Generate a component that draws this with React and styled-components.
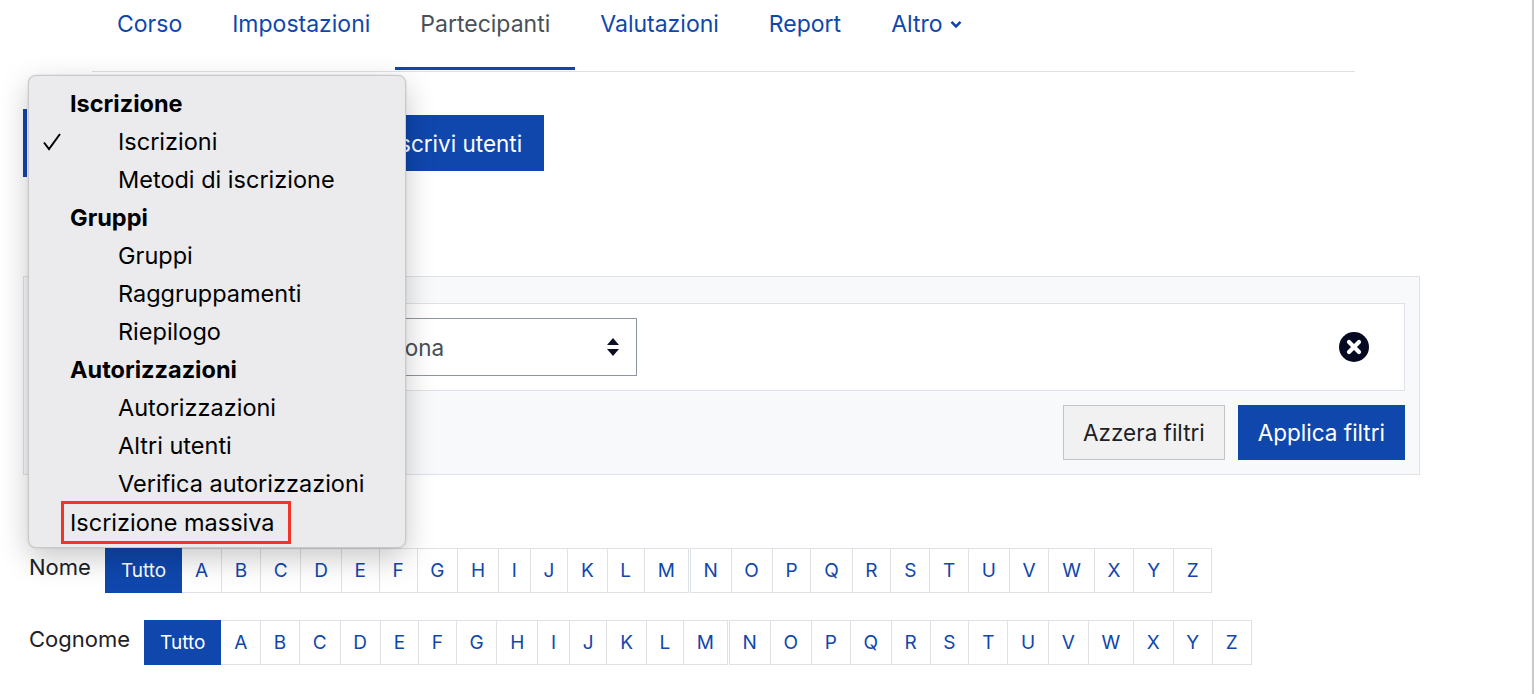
import React from "react";
import styled, { createGlobalStyle } from "styled-components";

const GlobalStyle = createGlobalStyle`
  body {
    margin: 0;
    background: #fff;
    font-family: Inter, "Noto Sans", sans-serif;
    color: #1d2125;
  }
`;

const BLUE = "#0f47ad";
const LINE = "#dee2e6";

const Page = styled.div`
  position: relative;
  width: 1534px;
  height: 694px;
  overflow: hidden;
  box-shadow: inset -2px 0 0 #c9c9c9;
`;

/* secondary navigation */
const TabBar = styled.nav`
  display: flex;
  margin-left: 92px;
  width: 1263px;
  border-bottom: 1px solid ${LINE};
  padding-bottom: 1px;
`;

const Tab = styled.a`
  display: flex;
  align-items: flex-start;
  gap: 7px;
  height: 70px;
  box-sizing: border-box;
  padding: 7px 25px 0;
  font-size: 23px;
  line-height: 34px;
  color: ${(p) => (p.$active ? "#495057" : BLUE)};
  border-bottom: 3px solid ${(p) => (p.$active ? BLUE : "transparent")};
  svg {
    margin-top: 13px;
  }
`;

const Main = styled.main`
  padding: 37px 0 0 23px;
`;

const ActionRow = styled.div`
  display: flex;
  align-items: center;
  gap: 24px;
  height: 68px;
`;

const NavSelect = styled.div`
  width: 324px;
  height: 68px;
  box-sizing: border-box;
  border-left: 4px solid ${BLUE};
  background: #fff;
`;

const Button = styled.button`
  height: ${(p) => (p.$tall ? 56 : 55)}px;
  padding: 0 ${(p) => (p.$tall ? 21 : 19)}px;
  font-family: inherit;
  font-size: 22.5px;
  border: 1px solid ${(p) => (p.$primary ? BLUE : "#c4c4c4")};
  background: ${(p) => (p.$primary ? BLUE : "#f1f1f1")};
  color: ${(p) => (p.$primary ? "#fff" : "#1d2125")};
  border-radius: 0;
`;

/* participants filter */
const FilterBox = styled.section`
  margin-top: 99px;
  width: 1397px;
  box-sizing: border-box;
  border: 1px solid ${LINE};
  background: #f8f9fa;
  padding: 26px 14px 14px;
`;

const FilterRow = styled.div`
  display: grid;
  grid-template-columns: 130px 121px 307px 1fr 30px;
  column-gap: 12px;
  align-items: center;
  height: 88px;
  box-sizing: border-box;
  padding: 0 35px 0 16px;
  background: #fff;
  border: 1px solid ${LINE};
`;

const Select = styled.div`
  display: flex;
  align-items: center;
  justify-content: space-between;
  height: 58px;
  box-sizing: border-box;
  padding: 0 16px 0 10px;
  border: 1px solid #8f959e;
  font-size: 22.5px;
  color: #495057;
`;

const ButtonRow = styled.div`
  display: flex;
  justify-content: flex-end;
  gap: 13px;
  margin-top: 14px;
`;

/* initials bars */
const Initials = styled.div`
  margin-top: 73px;
  padding-left: 6px;
  display: flex;
  flex-direction: column;
  gap: 27px;
`;

const InitialsRow = styled.div`
  display: flex;
  align-items: flex-start;
`;

const RowLabel = styled.span`
  font-size: 22px;
  line-height: 38px;
  margin-right: 14px;
  color: #1d2125;
`;

const Group = styled.div`
  display: flex;
  & + & {
    margin-left: 1px;
  }
`;

const Cell = styled.span`
  display: flex;
  align-items: center;
  height: 45px;
  box-sizing: border-box;
  padding: 0 ${(p) => (p.$active ? 15 : 12.8)}px;
  font-size: 19px;
  border: 1px solid ${(p) => (p.$active ? BLUE : LINE)};
  border-left-width: ${(p) => (p.$first ? 1 : 0)}px;
  background: ${(p) => (p.$active ? BLUE : "#fff")};
  color: ${(p) => (p.$active ? "#fff" : BLUE)};
`;

/* native select popup */
const Popup = styled.ul`
  position: absolute;
  left: 28px;
  top: 75px;
  width: 378px;
  height: 473px;
  box-sizing: border-box;
  margin: 0;
  padding: 8px 0 0;
  list-style: none;
  background: #ebebed;
  border: 1px solid #c9c9cc;
  border-radius: 8px;
  box-shadow: 0 10px 30px rgba(0, 0, 0, 0.22), 0 0 2px rgba(0, 0, 0, 0.15);
  font-size: 23.5px;
  color: #000;
`;

const Option = styled.li`
  position: relative;
  display: flex;
  align-items: center;
  height: 38px;
  padding-left: ${(p) => (p.$indent ? 89 : 41)}px;
  font-weight: ${(p) => (p.$heading ? 700 : 400)};
`;

const Check = styled.svg`
  position: absolute;
  left: 13px;
  top: 10px;
`;

const Marked = styled.span`
  display: inline-flex;
  align-items: center;
  height: 37px;
  margin: 3px 0 0 -9px;
  padding: 0 13px 0 6px;
  border: 3px solid #f2352a;
`;

const Chevron = () => (
  <svg width="12" height="9" viewBox="0 0 12 9">
    <path d="M1.5 1.8 6 6.3 10.5 1.8" fill="none" stroke={BLUE} strokeWidth="2.6" />
  </svg>
);

const SortArrows = () => (
  <svg width="14" height="20" viewBox="0 0 14 20">
    <path d="M7 1 13 8H1Z M7 19 1 12H13Z" fill="#0b0f24" />
  </svg>
);

const RemoveIcon = () => (
  <svg width="30" height="30" viewBox="0 0 30 30">
    <circle cx="15" cy="15" r="15" fill="#050a22" />
    <path d="M10 10 20 20M20 10 10 20" stroke="#fff" strokeWidth="4.2" strokeLinecap="round" />
  </svg>
);

const tabs = ["Corso", "Impostazioni", "Partecipanti", "Valutazioni", "Report"];
const letters = "ABCDEFGHIJKLMNOPQRSTUVWXYZ".split("");

const LetterBar = () => (
  <>
    <Group>
      <Cell $first $active>Tutto</Cell>
      {letters.slice(0, 13).map((l) => (
        <Cell key={l}>{l}</Cell>
      ))}
    </Group>
    <Group>
      {letters.slice(13).map((l, i) => (
        <Cell key={l} $first={i === 0}>{l}</Cell>
      ))}
    </Group>
  </>
);

const options = [
  { label: "Iscrizione", heading: true },
  { label: "Iscrizioni", indent: true, checked: true },
  { label: "Metodi di iscrizione", indent: true },
  { label: "Gruppi", heading: true },
  { label: "Gruppi", indent: true },
  { label: "Raggruppamenti", indent: true },
  { label: "Riepilogo", indent: true },
  { label: "Autorizzazioni", heading: true },
  { label: "Autorizzazioni", indent: true },
  { label: "Altri utenti", indent: true },
  { label: "Verifica autorizzazioni", indent: true },
];

export default function App() {
  return (
    <Page>
      <GlobalStyle />
      <TabBar>
        {tabs.map((t) => (
          <Tab key={t} $active={t === "Partecipanti"}>{t}</Tab>
        ))}
        <Tab>
          Altro <Chevron />
        </Tab>
      </TabBar>

      <Main>
        <ActionRow>
          <NavSelect />
          <Button $primary $tall>Iscrivi utenti</Button>
        </ActionRow>

        <FilterBox>
          <FilterRow>
            <span />
            <Select />
            <Select>
              Seleziona
              <SortArrows />
            </Select>
            <span />
            <RemoveIcon />
          </FilterRow>
          <ButtonRow>
            <Button>Azzera filtri</Button>
            <Button $primary>Applica filtri</Button>
          </ButtonRow>
        </FilterBox>

        <Initials>
          <InitialsRow>
            <RowLabel>Nome</RowLabel>
            <LetterBar />
          </InitialsRow>
          <InitialsRow>
            <RowLabel>Cognome</RowLabel>
            <LetterBar />
          </InitialsRow>
        </Initials>
      </Main>

      <Popup>
        {options.map((o, i) => (
          <Option key={i} $heading={o.heading} $indent={o.indent}>
            {o.checked && (
              <Check width="20" height="20" viewBox="0 0 20 20">
                <path d="M2 10.5 7 17 18 2" fill="none" stroke="#000" strokeWidth="2" />
              </Check>
            )}
            {o.label}
          </Option>
        ))}
        <Option>
          <Marked>Iscrizione massiva</Marked>
        </Option>
      </Popup>
    </Page>
  );
}
